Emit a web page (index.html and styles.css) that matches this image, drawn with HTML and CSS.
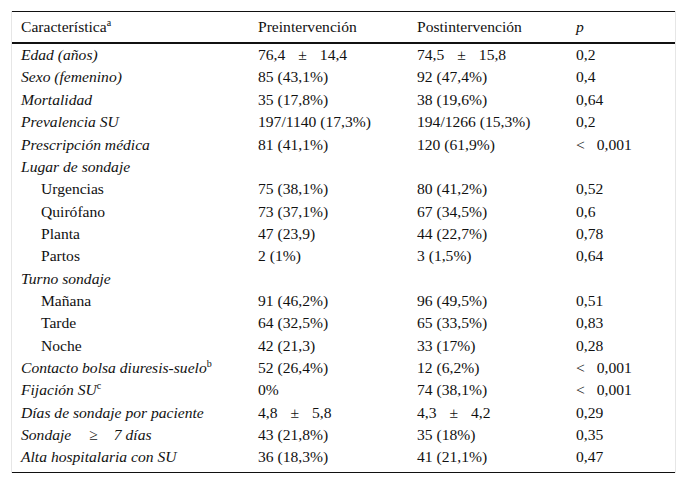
FILE: index.html
```html
<!DOCTYPE html>
<html lang="es">
<head>
<meta charset="utf-8">
<link rel="stylesheet" href="styles.css">
</head>
<body>
<div class="wrap">
<table class="data">
<colgroup><col class="c1"><col class="c2"><col class="c3"><col class="c4"></colgroup>
<thead>
<tr><th>Característica<sup>a</sup></th><th>Preintervención</th><th>Postintervención</th><th><i>p</i></th></tr>
</thead>
<tbody>
<tr><td class="it">Edad (años)</td><td>76,4<span class="op">±</span>14,4</td><td>74,5<span class="op">±</span>15,8</td><td>0,2</td></tr>
<tr><td class="it">Sexo (femenino)</td><td>85 (43,1%)</td><td>92 (47,4%)</td><td>0,4</td></tr>
<tr><td class="it">Mortalidad</td><td>35 (17,8%)</td><td>38 (19,6%)</td><td>0,64</td></tr>
<tr><td class="it">Prevalencia SU</td><td>197/1140 (17,3%)</td><td>194/1266 (15,3%)</td><td>0,2</td></tr>
<tr><td class="it">Prescripción médica</td><td>81 (41,1%)</td><td>120 (61,9%)</td><td><span class="lt">&lt;</span>0,001</td></tr>
<tr><td class="it">Lugar de sondaje</td><td></td><td></td><td></td></tr>
<tr><td class="sub">Urgencias</td><td>75 (38,1%)</td><td>80 (41,2%)</td><td>0,52</td></tr>
<tr><td class="sub">Quirófano</td><td>73 (37,1%)</td><td>67 (34,5%)</td><td>0,6</td></tr>
<tr><td class="sub">Planta</td><td>47 (23,9)</td><td>44 (22,7%)</td><td>0,78</td></tr>
<tr><td class="sub">Partos</td><td>2 (1%)</td><td>3 (1,5%)</td><td>0,64</td></tr>
<tr><td class="it">Turno sondaje</td><td></td><td></td><td></td></tr>
<tr><td class="sub">Mañana</td><td>91 (46,2%)</td><td>96 (49,5%)</td><td>0,51</td></tr>
<tr><td class="sub">Tarde</td><td>64 (32,5%)</td><td>65 (33,5%)</td><td>0,83</td></tr>
<tr><td class="sub">Noche</td><td>42 (21,3)</td><td>33 (17%)</td><td>0,28</td></tr>
<tr><td class="it">Contacto bolsa diuresis-suelo<sup>b</sup></td><td>52 (26,4%)</td><td>12 (6,2%)</td><td><span class="lt">&lt;</span>0,001</td></tr>
<tr><td class="it">Fijación SU<sup>c</sup></td><td>0%</td><td>74 (38,1%)</td><td><span class="lt">&lt;</span>0,001</td></tr>
<tr><td class="it">Días de sondaje por paciente</td><td>4,8<span class="op">±</span>5,8</td><td>4,3<span class="op">±</span>4,2</td><td>0,29</td></tr>
<tr><td class="it">Sondaje<span class="op wide">≥</span>7 días</td><td>43 (21,8%)</td><td>35 (18%)</td><td>0,35</td></tr>
<tr class="last"><td class="it">Alta hospitalaria con SU</td><td>36 (18,3%)</td><td>41 (21,1%)</td><td>0,47</td></tr>
</tbody>
</table>
</div>
</body>
</html>
```
FILE: styles.css
```css
html, body {
  margin: 0;
  padding: 0;
  background: #ffffff;
}
body {
  font-family: "Liberation Serif", "Times New Roman", serif;
  font-size: 15.6px;
  color: #111;
}
.wrap {
  margin: 11px 0 0 11px;
  width: 663px;
  border-left: 1px solid #e6e6e6;
  border-right: 1px solid #e6e6e6;
}
.data {
  width: 663px;
  border-collapse: collapse;
  table-layout: fixed;
  border-top: 1px solid #111;
  border-bottom: 1px solid #111;
  font-size: 15.6px;
}
.c1 { width: 237px; }
.c2 { width: 159px; }
.c3 { width: 159px; }
.c4 { width: 108px; }
.data th {
  font-weight: normal;
  text-align: left;
  height: 30px;
  padding: 0 0 0 9px;
  vertical-align: middle;
  border-bottom: 2px solid #111;
  line-height: 18px;
}
.data td {
  height: 22.35px;
  padding: 2.17px 0 2.18px 9px;
  box-sizing: border-box;
  vertical-align: top;
  line-height: 18px;
  white-space: nowrap;
}
.data tr.last td {
  height: 26px;
  padding-bottom: 5.82px;
}
.it {
  font-style: italic;
}
.sub {
  padding-left: 29px !important;
}
sup {
  font-size: 10px;
  font-style: normal;
  line-height: 0;
  vertical-align: 6px;
}
.op {
  margin: 0 13px;
  font-style: normal;
}
.op.wide {
  margin: 0 16px 0 18px;
}
.lt {
  margin-right: 12px;
}
```
